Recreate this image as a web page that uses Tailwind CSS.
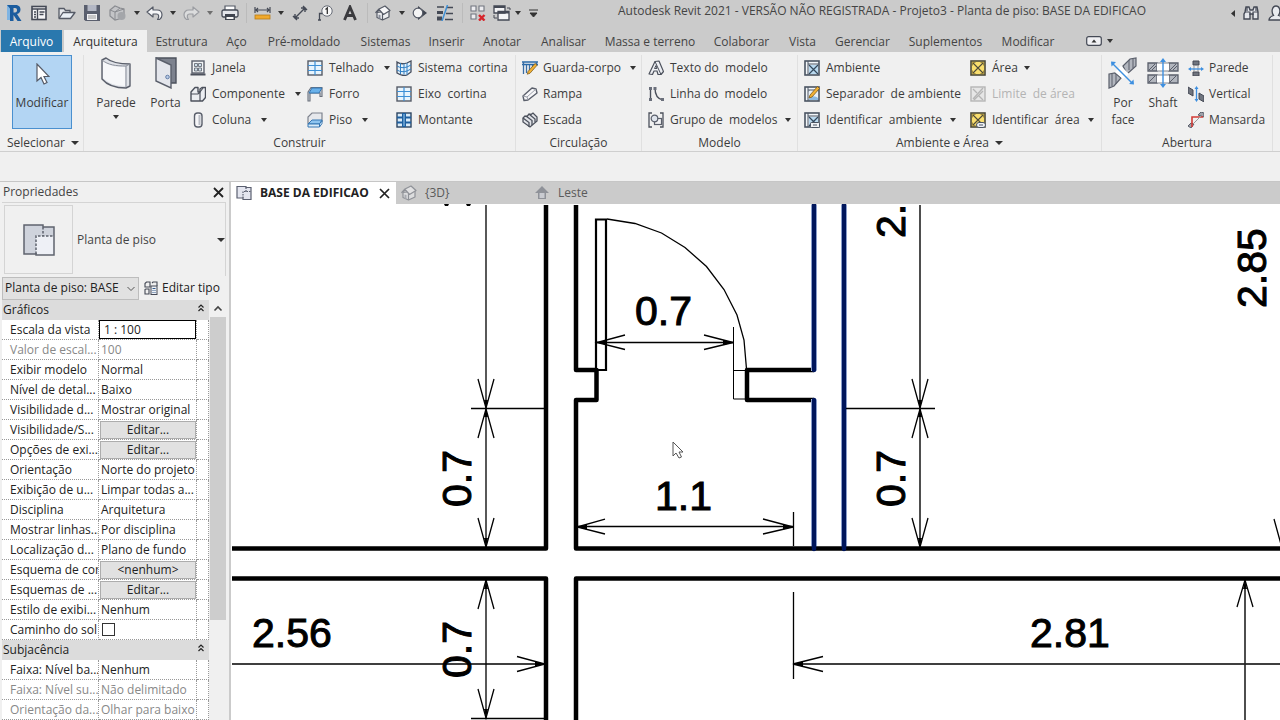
<!DOCTYPE html>
<html lang="pt-BR">
<head>
    <meta charset="UTF-8">
    <meta name="viewport" content="width=device-width, initial-scale=1.0">
    <title>Autodesk Revit 2021 - Projeto3</title>
    <script src="https://cdn.jsdelivr.net/npm/@tailwindcss/browser@4"></script>
</head>
<body class="h-screen flex flex-col overflow-hidden bg-[#f0f0f0] font-['Open_Sans','Noto_Sans',sans-serif] text-xs text-[#3c3c3c] whitespace-nowrap">
    <!-- Shared symbols -->
    <svg class="hidden">
        <symbol id="caret" viewBox="0 0 6 4"><path d="M0 0h6L3 4z" fill="#333"/></symbol>
        <symbol id="grid" viewBox="0 0 16 16">
            <rect x="1" y="1" width="14" height="14" fill="#e8f4fd" stroke="#555b66" stroke-width="1.4"/>
            <path d="M8 1v14M1 5.500h14M1 10.500h14" stroke="#3d8fd6" stroke-width="1.2"/>
        </symbol>
        <symbol id="plan" viewBox="0 0 16 16">
            <path d="M1 1.500h9v1h5v12H7V13H1z" fill="#e3e5ef" stroke="#5a5f70" stroke-width="1.2"/>
            <path d="M10 2.500v4M7 13V6.500h8" fill="none" stroke="#5a5f70" stroke-width="1.2" stroke-dasharray="1.500 1"/>
        </symbol>
        <symbol id="house" viewBox="0 0 16 16">
            <path d="M2 7.500v5L7.500 15l6.500-3V6z" fill="#eeeff2" stroke="#555a66" stroke-width="1.200" stroke-linejoin="round"/>
            <path d="M.8 7.500L4 4l6-3 5 4.500-6.500 4L4.500 5z" fill="#f7f7f9" stroke="#555a66" stroke-width="1.200" stroke-linejoin="round"/>
            <path d="M7.500 9v6" stroke="#555a66" stroke-width="1.200"/>
            <path d="M3.500 9.500L5.500 10v4l-2-.8z" fill="#888d99"/>
        </symbol>
        <symbol id="room" viewBox="0 0 16 16">
            <rect x="1" y="1" width="14" height="14" fill="#f4f7fa" stroke="#4a5462" stroke-width="1.6"/>
            <path d="M4 1v14M4 4h11" stroke="#4a5462"/>
            <rect x="5" y="5" width="9" height="9" fill="#b9d9ef"/>
            <path d="M5 5l9 9M14 5l-9 9" stroke="#33485c" stroke-width="1.2"/>
        </symbol>
        <symbol id="area" viewBox="0 0 16 16">
            <rect x="1" y="1" width="14" height="14" fill="#f9de6e" stroke="#4d4a3a" stroke-width="1.6"/>
            <path d="M3 3l10 10M13 3L3 13" stroke="#4d4a3a" stroke-width="1.1"/>
            <path d="M2.500 5.500v-3h3M10.500 2.500h3v3M2.500 10.500v3h3M10.500 13.500h3v-3" fill="none" stroke="#8a7630" stroke-width=".8"/>
        </symbol>
        <symbol id="pencil" viewBox="0 0 16 16">
            <path d="M6 10l7.500-8.500 2 2L8 12l-3 1z" fill="#f2b134" stroke="#7b5a1c" stroke-width=".8"/>
        </symbol>
    </svg>

    <header class="bg-[#cbcbcb]">
        <!-- Quick access toolbar -->
        <div class="flex items-center h-[30px] pb-1">
            <button aria-label="Revit" class="w-[27px] flex justify-center">
                <svg class="w-4 h-5" viewBox="0 0 16 20">
                    <path d="M1 2h3v15H1z" fill="#7fb4e3"/>
                    <path d="M3 2h6.500c4 0 5 2.500 5 4.500 0 2.500-1.500 4-3.500 4.500l4.500 7h-4L7.500 12v6H4V5.500L1 2zM7.500 5v4.500H9c1.500 0 2-.9 2-2.200C11 5.700 10.400 5 9 5z" fill="#1b5c9e" fill-rule="evenodd"/>
                </svg>
            </button>
            <button aria-label="Início" class="w-[23px] flex justify-center">
                <svg class="w-4 h-4" viewBox="0 0 16 16"><rect x="1" y="1.500" width="14" height="13" fill="#f5f5f7" stroke="#444955" stroke-width="1.6"/><path d="M1 4h14M6.500 4v10M3 7h2M3 9.500h2M3 12h2M8.500 7h5M8.500 9.500h4" stroke="#444955" stroke-width="1.4"/></svg>
            </button>
            <button aria-label="Abrir" class="w-[34px] flex justify-center">
                <svg class="w-[18px] h-4" viewBox="0 0 18 16"><path d="M1 13V3.500h5l1.500 2H12V8" fill="#e6e8ec" stroke="#555a66" stroke-width="1.3"/><path d="M1 13.500L5 7.500h12l-4.500 6z" fill="#e9eef5" stroke="#555a66" stroke-width="1.3" stroke-linejoin="round"/></svg>
            </button>
            <button aria-label="Salvar" class="w-4 flex justify-center">
                <svg class="w-4 h-4" viewBox="0 0 16 16"><path d="M0 0h16v16H1.500L0 14.500z" fill="#5a5f6e"/><rect x="3.500" y="0" width="9" height="6" fill="#b3b7c4"/><rect x="3" y="9" width="10" height="6" fill="#f2f2f5"/><path d="M4 11h8M4 13h8" stroke="#999"/></svg>
            </button>
            <button aria-label="Sincronizar" class="w-[34px] flex justify-center">
                <svg class="w-[17px] h-4" viewBox="0 0 17 16"><path d="M1 5l5-4 5 2 4 1v6l-5 4-4 1-5-4z" fill="#c3c4c7" stroke="#8a8c91" stroke-width="1.2"/><path d="M1 5l5 2 5-4M6 7v8M6 7l9-3" fill="none" stroke="#8a8c91"/><circle cx="12.500" cy="11" r="4" fill="#a4a6aa"/></svg>
            </button>
            <svg class="w-[6px] h-[4px]"><use href="#caret"/></svg>
            <button aria-label="Desfazer" class="w-[29px] flex justify-center">
                <svg class="w-[17px] h-4" viewBox="0 0 17 16"><path d="M1 7l6-5v3h4c3.500 0 5 2.500 5 5s-1 3.500-2.500 4.500h-2c2-2.500 1.500-5.500-1-5.500H7v3z" fill="#f5f6f8" stroke="#555a66" stroke-width="1.2" stroke-linejoin="round"/></svg>
            </button>
            <svg class="w-[6px] h-[4px] ml-[1px]"><use href="#caret"/></svg>
            <button aria-label="Refazer" class="w-[31px] flex justify-center opacity-40">
                <svg class="w-[17px] h-4" viewBox="0 0 17 16"><path d="M16 7l-6-5v3H6C2.500 5 1 7.500 1 10s1 3.500 2.500 4.500h2C3.500 12 4 9 6.500 9H10v3z" fill="#f5f6f8" stroke="#555a66" stroke-width="1.2" stroke-linejoin="round"/></svg>
            </button>
            <svg class="w-[6px] h-[4px] opacity-60"><use href="#caret"/></svg>
            <button aria-label="Imprimir" class="w-[33px] flex justify-center">
                <svg class="w-[18px] h-4" viewBox="0 0 18 16"><path d="M4 5V1h10v4" fill="#fff" stroke="#555a66" stroke-width="1.2"/><rect x="1" y="5" width="16" height="7" rx="1.500" fill="#e3e5ea" stroke="#444955" stroke-width="1.3"/><path d="M4 9h10v6H4z" fill="#3f444f"/><path d="M5.500 12h7v2h-7z" fill="#f4f4f4"/></svg>
            </button>
            <div class="w-px h-5 bg-[#bbb]"></div>
            <button aria-label="Medir" class="w-[31px] flex justify-center">
                <svg class="w-[17px] h-4" viewBox="0 0 17 16"><path d="M1 2v6M16 2v6M1 5h15M4 3L2 5l2 2M13 3l2 2-2 2" fill="none" stroke="#444955" stroke-width="1.2"/><rect x="1" y="10" width="15" height="4" fill="#f0a92c" stroke="#b77c18" stroke-width=".8"/></svg>
            </button>
            <svg class="w-[6px] h-[4px]"><use href="#caret"/></svg>
            <button aria-label="Cota alinhada" class="w-[32px] flex justify-center">
                <svg class="w-4 h-4" viewBox="0 0 16 16"><path d="M3 13L13 3M1 11l4 4M11 1l4 4M3 9v4h4M9 3h4v4" fill="none" stroke="#444955" stroke-width="1.4"/></svg>
            </button>
            <button aria-label="Identificador" class="w-[18px] flex justify-center">
                <svg class="w-4 h-4" viewBox="0 0 16 16"><path d="M1 15h3M2.500 15V8.500H6" fill="none" stroke="#444955" stroke-width="1.3"/><circle cx="10" cy="6" r="5.200" fill="#f7f7f7" stroke="#666b76"/><path d="M8.500 4.500L10.300 3v6" fill="none" stroke="#333" stroke-width="1.3"/></svg>
            </button>
            <button aria-label="Texto" class="w-[31px] flex justify-center">
                <svg class="w-[14px] h-4" viewBox="0 0 14 16"><path d="M1.500 15L7 2l5.500 13M3.500 10.500h7" fill="none" stroke="#3a3a3e" stroke-width="2.800"/></svg>
            </button>
            <div class="w-px h-5 ml-[2px] bg-[#bbb]"></div>
            <button aria-label="Vista 3D" class="w-[29px] flex justify-center"><svg class="w-4 h-4"><use href="#house"/></svg></button>
            <svg class="w-[6px] h-[4px] ml-[2px]"><use href="#caret"/></svg>
            <button aria-label="Corte" class="w-[28px] flex justify-center">
                <svg class="w-[15px] h-4" viewBox="0 0 15 16"><path d="M6 1l9 7-9 7z" fill="#3f444f"/><circle cx="6" cy="8" r="4.800" fill="#f4f4f4" stroke="#555a66" stroke-width="1.2"/></svg>
            </button>
            <button aria-label="Linhas finas" class="w-[24px] flex justify-center">
                <svg class="w-[18px] h-4" viewBox="0 0 18 16"><path d="M1 2h7M11 2.500h6M10 8.500h7M9 14.500h8" stroke="#444955" stroke-width="1.4"/><path d="M1 7.500h6" stroke="#444955" stroke-width="3"/><path d="M1 13.500h5" stroke="#444955" stroke-width="4"/><path d="M11.500 0L6 16" stroke="#3d8fd6" stroke-width="1.500"/></svg>
            </button>
            <div class="w-px h-5 ml-[5px] bg-[#bbb]"></div>
            <button aria-label="Fechar vistas" class="w-[29px] flex justify-center">
                <svg class="w-4 h-4" viewBox="0 0 16 16"><path d="M1 1h5v5H1zM9 1h5v5H9zM1 9h5v5H1z" fill="#ededf0" stroke="#70757f" stroke-width="1.1"/><path d="M9 10l5.500 5.500M14.500 10L9 15.500" stroke="#d6252b" stroke-width="2.400"/></svg>
            </button>
            <button aria-label="Alternar janelas" class="w-[20px] flex justify-center">
                <svg class="w-[18px] h-4" viewBox="0 0 18 16"><path d="M1 1h11v7H1zM5 6.500h11V15H5z" fill="#f4f4f6" stroke="#444955" stroke-width="1.300"/><path d="M1 2h11M5 7.500h11" stroke="#444955" stroke-width="2"/><path d="M14 3h3v2M1 10v3h3" fill="none" stroke="#444955"/></svg>
            </button>
            <svg class="w-[6px] h-[4px] ml-[3px]"><use href="#caret"/></svg>
            <button aria-label="Personalizar" class="w-[24px] flex justify-center">
                <svg class="w-[9px] h-2" viewBox="0 0 9 8"><path d="M0 1h9M1 4h7L4.500 8z" fill="#333" stroke="#333"/></svg>
            </button>
            <h1 class="flex-1 pl-[73px] pb-1 text-xs text-[#444] overflow-hidden">Autodesk Revit 2021 - VERSÃO NÃO REGISTRADA - Projeto3 - Planta de piso: BASE DA EDIFICAO</h1>
            <svg class="w-1 h-[7px] mr-2" viewBox="0 0 4 7"><path d="M4 0v7L0 3.500z" fill="#333"/></svg>
            <button aria-label="Pesquisar" class="mr-2">
                <svg class="w-[17px] h-4" viewBox="0 0 17 16"><path d="M2 7l1-5h3l1 3h3l1-3h3l1 5v7h-5V9H7v5H1V9z" fill="#e4e6eb" stroke="#444955" stroke-width="1.4"/><path d="M2 7h5v3M15 7h-5v3M4 2v4M13 2v4" fill="none" stroke="#444955" stroke-width="1.2"/></svg>
            </button>
            <button aria-label="Conta" class="w-3 overflow-hidden">
                <svg class="w-4 h-4" viewBox="0 0 16 16"><path d="M1 15c0-3 3-4 4.500-4.500C3 7 4 1 8 1s5 6 2.500 9.500C12 11 15 12 15 15z" fill="#e9ebef" stroke="#444955" stroke-width="1.300"/></svg>
            </button>
        </div>

        <!-- Ribbon tabs -->
        <nav class="flex h-[22px] items-stretch text-center text-[#444] [&>a]:leading-6">
            <a href="#" class="w-[61px] ml-px mr-[2px] bg-[#2a78ae] text-white">Arquivo</a>
            <a href="#" class="w-[83px] bg-[#f0f0f0] text-[#333]">Arquitetura</a>
            <a href="#" class="w-[69px]">Estrutura</a>
            <a href="#" class="w-[41px]">Aço</a>
            <a href="#" class="w-[94px]">Pré-moldado</a>
            <a href="#" class="w-[69px]">Sistemas</a>
            <a href="#" class="w-[53px]">Inserir</a>
            <a href="#" class="w-[58px]">Anotar</a>
            <a href="#" class="w-[65px]">Analisar</a>
            <a href="#" class="w-[108px]">Massa e terreno</a>
            <a href="#" class="w-[75px]">Colaborar</a>
            <a href="#" class="w-[47px]">Vista</a>
            <a href="#" class="w-[73px]">Gerenciar</a>
            <a href="#" class="w-[93px]">Suplementos</a>
            <a href="#" class="w-[72px]">Modificar</a>
            <button aria-label="Minimizar faixa" class="flex items-center gap-[5px] ml-[22px]">
                <svg class="w-4 h-[10px]" viewBox="0 0 16 10"><rect x=".7" y=".7" width="14.600" height="8.600" rx="2" fill="#f0f0f3" stroke="#444955" stroke-width="1.200"/><path d="M5.500 6.500L8 3.500l2.500 3z" fill="#333"/></svg>
                <svg class="w-[6px] h-[4px]"><use href="#caret"/></svg>
            </button>
        </nav>
    </header>

    <!-- Ribbon panels -->
    <section class="flex h-[100px] pt-[3px] border-b border-[#cfcfcf] shrink-0 overflow-hidden [&>div]:shrink-0 [&>div]:border-r [&>div]:border-[#e0e0e0]">
        <div class="w-[84px]">
            <button class="ml-3 w-[60px] h-[74px] mb-1 bg-[#b3d5f3] border border-[#4a90cf] flex flex-col items-center pt-[7px] gap-[10px]">
                <svg class="w-4 h-[22px]" viewBox="0 0 16 22"><path d="M3 1v17l4-3.500L10 21l3-1.500-3-6h5z" fill="#fff" stroke="#555a66" stroke-width="1.200"/></svg>
                Modificar
            </button>
            <button class="flex items-center gap-[6px] h-5 pl-[7px]">Selecionar <svg class="w-2 h-1" viewBox="0 0 8 4"><path d="M0 0h8L4 4z" fill="#333"/></svg></button>
        </div>

        <div class="w-[432px]">
            <div class="flex h-[78px]">
                <button class="w-[64px] flex flex-col items-center pt-[2px]">
                    <svg class="w-8 h-8" viewBox="0 0 32 32"><path d="M2 3l4-2c6 5 14 6 24 6v22l-4 2C15 31 7 28 2 22z" fill="#dfe2e8" stroke="#5a5f6b" stroke-width="1.400" stroke-linejoin="round"/><path d="M3 4c6 5 14 6 22 6v19C16 29 8 26 3 21z" fill="#f6f7f9"/><path d="M2 3c6 5 14 6 24 6l4-2M26 9v21" fill="none" stroke="#8a8f9a"/></svg>
                    <span class="mt-[5px] leading-[18px]">Parede</span>
                    <svg class="w-[6px] h-[4px] mt-[3px]"><use href="#caret"/></svg>
                </button>
                <button class="w-[35px] flex flex-col items-center pt-[2px]">
                    <svg class="w-6 h-8" viewBox="0 0 24 32"><path d="M2 1h20v25h-5" fill="#7d828e" stroke="#4c515c" stroke-width="1.400"/><path d="M2 1l15 7v23L2 24z" fill="#e4e6ec" stroke="#5a5f6b" stroke-width="1.400"/><circle cx="13.500" cy="20" r="1.800" fill="#b9cbe6" stroke="#4c6a99" stroke-width=".8"/></svg>
                    <span class="mt-[5px] leading-[18px]">Porta</span>
                </button>
                <div class="w-[117px] pl-[7px] [&>button]:flex [&>button]:items-center [&>button]:gap-[6px] [&>button]:h-[26px]">
                    <button><svg class="w-4 h-4" viewBox="0 0 16 16"><rect x="2" y="1" width="12" height="12" fill="#f2f4f6" stroke="#5a5f6b" stroke-width="1.400"/><path d="M4.500 3.500h3v3h-3zM8.500 3.500h3v3h-3zM4.500 8h3v3h-3zM8.500 8h3v3h-3z" fill="#cfe0ea" stroke="#5a5f6b" stroke-width=".8"/><path d="M.5 14.500h15" stroke="#4c515c" stroke-width="2"/></svg>Janela</button>
                    <button><svg class="w-4 h-4" viewBox="0 0 16 16"><path d="M1 8V6l4-4.500h3V6h2V3l2-1.500h3.500v10l-3 3.500H1z" fill="#eceef2" stroke="#4c515c" stroke-width="1.400" stroke-linejoin="round"/><path d="M1 8h7l2-2v9M10 6l3-4" fill="none" stroke="#4c515c" stroke-width="1.200"/></svg>Componente<svg class="w-[6px] h-[4px] ml-1"><use href="#caret"/></svg></button>
                    <button><svg class="w-4 h-4" viewBox="0 0 16 16"><rect x="4.500" y="1" width="7.500" height="14" rx="3" fill="#f6f6f8" stroke="#5a5f6b" stroke-width="1.400"/><path d="M9.500 3v10" stroke="#b9bcc4" stroke-width="2"/></svg>Coluna<svg class="w-[6px] h-[4px] ml-1"><use href="#caret"/></svg></button>
                </div>
                <div class="w-[89px] pl-[7px] [&>button]:flex [&>button]:items-center [&>button]:gap-[6px] [&>button]:h-[26px]">
                    <button><svg class="w-4 h-4"><use href="#grid"/></svg>Telhado<svg class="w-[6px] h-[4px] ml-1"><use href="#caret"/></svg></button>
                    <button><svg class="w-4 h-4" viewBox="0 0 16 16"><path d="M1 6l3-4.500h11v9H13V7H3v8H1z" fill="#d5d9e0" stroke="#6a707c" stroke-width="1.100"/><path d="M2 7l3-5h10l-3 5z" fill="#69b1ea" stroke="#3576b3"/></svg>Forro</button>
                    <button><svg class="w-4 h-4" viewBox="0 0 16 16"><path d="M1 12V5l4-4h10v9" fill="#e6e8ec" stroke="#7d828d" stroke-width="1.200"/><path d="M1 12l4-4h10l-2.500 4z" fill="#8ec5f0" stroke="#3576b3"/><path d="M1 12h11.500v3H1zM12.500 12L15 8.500v3L12.500 15" fill="#d9ecf9" stroke="#3576b3"/></svg>Piso<svg class="w-[6px] h-[4px] ml-1"><use href="#caret"/></svg></button>
                </div>
                <div class="pl-[7px] [&>button]:flex [&>button]:items-center [&>button]:gap-[6px] [&>button]:h-[26px]">
                    <button><svg class="w-4 h-4" viewBox="0 0 16 16"><path d="M1 2c3 2 7 2 10 1l4-2v11l-4 3c-3 1-7 0-10-2z" fill="#e4f1fb" stroke="#444c5c" stroke-width="1.300"/><path d="M1 6c3 2 7 2 10 1l4-2M1 10c3 2 7 2 10 1l4-2M4.500 3v11M8 3.500v11M11 3v12" fill="none" stroke="#2f7fc4"/></svg>Sistema&nbsp; cortina</button>
                    <button><svg class="w-4 h-4"><use href="#grid"/></svg>Eixo&nbsp; cortina</button>
                    <button><svg class="w-4 h-4" viewBox="0 0 16 16"><rect x="1" y="1" width="14" height="14" fill="#d9ebf8" stroke="#2d4561" stroke-width="1.400"/><path d="M1 5.500h14M1 10.500h14" stroke="#1d5f9f" stroke-width="2.200"/><path d="M8 1v14" stroke="#1d5f9f" stroke-width="4"/><path d="M8 2v12" stroke="#9fd0f5"/></svg>Montante</button>
                </div>
            </div>
            <div class="h-5 leading-5 text-center">Construir</div>
        </div>

        <div class="w-[126px]">
            <div class="h-[78px] pl-[6px] [&>button]:flex [&>button]:items-center [&>button]:gap-[5px] [&>button]:h-[26px]">
                <button><svg class="w-4 h-4" viewBox="0 0 16 16"><path d="M0 2h16M0 4.500h16" stroke="#2869a8" stroke-width="1.600"/><path d="M1.500 2v12M4.500 5v8M7.500 5v8M10.500 5v5M14.500 2v4" stroke="#3a6ea5" stroke-width="1.300"/><use href="#pencil" y="2" width="16" height="15"/></svg>Guarda-corpo<svg class="w-[6px] h-[4px] ml-1"><use href="#caret"/></svg></button>
                <button><svg class="w-4 h-4" viewBox="0 0 16 16"><path d="M1 10l9-8 4 1 1 4-9 7-4 .5z" fill="#f7f7f9" stroke="#5a5f6b" stroke-width="1.400" stroke-linejoin="round"/><path d="M1 10l4 1 1 3M5 11l9-8" fill="none" stroke="#9a9ea8"/></svg>Rampa</button>
                <button><svg class="w-4 h-4" viewBox="0 0 16 16"><path d="M1 6l2-2 2 .5L7 2l2 .5L11 1l4 4v4l-7 6-7-5z" fill="#e2e4e9" stroke="#4c515c" stroke-width="1.300"/><path d="M1 6l6 4.500V15M4 4l6 4.500V13M7.500 2.500L13 7v3" fill="none" stroke="#4c515c" stroke-width="1.300"/></svg>Escada</button>
            </div>
            <div class="h-5 leading-5 text-center">Circulação</div>
        </div>

        <div class="w-[156px]">
            <div class="h-[78px] pl-[6px] [&>button]:flex [&>button]:items-center [&>button]:gap-[6px] [&>button]:h-[26px]">
                <button><svg class="w-4 h-4" viewBox="0 0 16 16"><path d="M1 14L7 1.500l4-.5 4.500 10.500-2.500 3h-3L9 11H6l-1.500 3.500z" fill="#eceef2" stroke="#4c515c" stroke-width="1.200" stroke-linejoin="round"/><path d="M7 1.500l6 13M6.500 8.500L8 5.500l1 3z" fill="none" stroke="#4c515c"/></svg>Texto do&nbsp; modelo</button>
                <button><svg class="w-4 h-4" viewBox="0 0 16 16"><path d="M2.500 2v12M7 2c0 7 2 11 8 12" fill="none" stroke="#4c515c" stroke-width="1.400"/><path d="M1 1h3v3H1zM1 12h3v3H1zM5.500 1h3v3h-3zM13 12h3v3h-3z" fill="#6a6f7b"/></svg>Linha do&nbsp; modelo</button>
                <button><svg class="w-4 h-4" viewBox="0 0 16 16"><path d="M4 1H1v14h3M12 1h3v14h-3" fill="none" stroke="#4c515c" stroke-width="1.300"/><rect x="6.500" y="6.500" width="7" height="6" fill="#f3f3f6" stroke="#5a5f6b" stroke-width="1.200"/><circle cx="6.500" cy="6.500" r="3.300" fill="#dfe4ec" stroke="#5a5f6b" stroke-width="1.200"/></svg>Grupo de&nbsp; modelos<svg class="w-[6px] h-[4px] ml-[2px]"><use href="#caret"/></svg></button>
            </div>
            <div class="h-5 leading-5 text-center">Modelo</div>
        </div>

        <div class="w-[304px]">
            <div class="flex h-[78px]">
                <div class="w-[164px] pl-[6px] [&>button]:flex [&>button]:items-center [&>button]:gap-[6px] [&>button]:h-[26px]">
                    <button><svg class="w-4 h-4"><use href="#room"/></svg>Ambiente</button>
                    <button><svg class="w-4 h-4"><use href="#room"/><path d="M5 5h9v9H5z" fill="#e8f0f6"/><path d="M5 13c3-4 6-3 9-1v2H5z" fill="#8fbbe0"/><use href="#pencil" y="-1"/></svg>Separador&nbsp; de ambiente</button>
                    <button><svg class="w-4 h-4"><use href="#room"/><rect x="6.500" y="10.500" width="9" height="5" rx="1" fill="#f0f2f5" stroke="#4a5462"/><path d="M9 13h4" stroke="#4a5462"/></svg>Identificar&nbsp; ambiente<svg class="w-[6px] h-[4px] ml-[2px]"><use href="#caret"/></svg></button>
                </div>
                <div class="pl-2 [&>button]:flex [&>button]:items-center [&>button]:gap-[6px] [&>button]:h-[26px]">
                    <button><svg class="w-4 h-4"><use href="#area"/></svg>Área<svg class="w-[6px] h-[4px]"><use href="#caret"/></svg></button>
                    <button disabled class="text-[#b4b4b4]"><svg class="w-4 h-4" viewBox="0 0 16 16"><rect x="1" y="1" width="14" height="14" fill="#e6e6e6" stroke="#b5b5b5" stroke-width="1.400"/><path d="M3 13L13 2M3 3l4 4M9 10l4 4M4 14l9-9" stroke="#b5b5b5" stroke-width="1.300"/></svg>Limite&nbsp; de área</button>
                    <button><svg class="w-4 h-4"><use href="#area"/><rect x="6.500" y="10.500" width="9" height="5" rx="2.500" fill="#f0f2f5" stroke="#4a5462"/><path d="M9 13h4" stroke="#4a5462"/></svg>Identificar&nbsp; área<svg class="w-[6px] h-[4px] ml-[2px]"><use href="#caret"/></svg></button>
                </div>
            </div>
            <button class="flex items-center justify-center gap-[6px] h-5 w-full">Ambiente e Área <svg class="w-2 h-1" viewBox="0 0 8 4"><path d="M0 0h8L4 4z" fill="#333"/></svg></button>
        </div>

        <div class="w-[171px]">
            <div class="flex h-[78px]">
                <button class="w-[42px] flex flex-col items-center pt-[2px]">
                    <svg class="w-8 h-8" viewBox="0 0 32 32"><path d="M16 9l7-7 6-1v8l-9 8zM2 17l6-1 6 5-7 8-5 2z" fill="#b2b6be" stroke="#5a5f6b" stroke-width="1.200"/><path d="M22 3v10M26 2v9M5 17v12M9 17v10" stroke="#5a5f6b"/><path d="M14 9l8 8-6 5-8-7z" fill="#fff"/><path d="M5 6l20 20" stroke="#3d8fe0" stroke-width="1.400"/><path d="M4 4.500l5 .5-4.500 4.500zM27 27.500l-5-.5 4.500-4.500z" fill="#3d8fe0"/></svg>
                    <span class="mt-[5px] leading-[17px] whitespace-normal">Por face</span>
                </button>
                <button class="w-[38px] flex flex-col items-center pt-[2px]">
                    <svg class="w-8 h-8" viewBox="0 0 32 32"><path d="M1 6h9v8H1zM22 6h9v8h-9zM1 18h9v8H1zM22 18h9v8h-9z" fill="#b2b6be" stroke="#5a5f6b" stroke-width="1.300"/><path d="M2 13l6-6M5 13l4-4M23 13l6-6M26 13l4-4M2 25l6-6M23 25l6-6" stroke="#5a5f6b"/><path d="M10 6h12v8H10zM10 18h12v8H10z" fill="#fff"/><path d="M10 6h12M10 14h12M10 18h12M10 26h12" stroke="#80858f"/><path d="M16 3v26" stroke="#3d8fe0" stroke-width="1.400"/><path d="M13 5l3-4 3 4zM13 27l3 4 3-4z" fill="#3d8fe0"/></svg>
                    <span class="mt-[5px] leading-[17px]">Shaft</span>
                </button>
                <div class="pl-[6px] [&>button]:flex [&>button]:items-center [&>button]:gap-[5px] [&>button]:h-[26px]">
                    <button><svg class="w-4 h-4" viewBox="0 0 16 16"><path d="M5 1h6v4H5zM5 12h6v4H5z" fill="#70757f" stroke="#444955"/><path d="M6 5v7M10 5v7" stroke="#999"/><path d="M2 9h12" stroke="#3d8fe0" stroke-width="1.300"/><path d="M0 9l3-2v4zM16 9l-3-2v4z" fill="#3d8fe0"/></svg>Parede</button>
                    <button><svg class="w-4 h-4" viewBox="0 0 16 16"><path d="M0 1l5 3v6L0 7zM11 7l5 3v6l-5-3z" fill="#70757f" stroke="#444955"/><path d="M8.500 2v12" stroke="#3d8fe0" stroke-width="1.300"/><path d="M6.500 3l2-3 2 3zM6.500 13l2 3 2-3z" fill="#3d8fe0"/></svg>Vertical</button>
                    <button><svg class="w-4 h-4" viewBox="0 0 16 16"><path d="M0 14l3-3 3 1-3 4zM10 3l3-3 3 1v4z" fill="#9ea2ab" stroke="#5a5f6b"/><path d="M4 15V5h11" fill="none" stroke="#d23b36" stroke-width="1.600"/><path d="M5 12l8-8" stroke="#999"/></svg>Mansarda</button>
                </div>
            </div>
            <div class="h-5 leading-5 text-center">Abertura</div>
        </div>
    </section>

    <!-- Options bar -->
    <div class="h-[30px] shrink-0 border-b border-[#c6c6c6]"></div>

    <div class="flex flex-1 min-h-0">
        <!-- Properties palette -->
        <aside class="w-[231px] shrink-0 pl-[2px] flex flex-col border-r-2 border-[#cbcbcb] text-[#222]">
            <div class="flex items-center justify-between h-5 pl-px pr-[5px] text-[#444]">
                <h2>Propriedades</h2>
                <button aria-label="Fechar"><svg class="w-[11px] h-[11px]" viewBox="0 0 11 11"><path d="M1 1l9 9M10 1l-9 9" stroke="#222" stroke-width="1.800"/></svg></button>
            </div>
            <button class="flex items-center h-[74px] mr-[3px] pl-[2px] border-t border-r border-[#d4d4d4] text-[#444]">
                <span class="w-[69px] h-[69px] border border-[#d4d4d4] flex items-center justify-center">
                    <svg class="w-8 h-8" viewBox="0 0 32 32"><path d="M1 1h19v2h11v28H13v-1H1z" fill="#cfd3dc"/><path d="M13 12h18v19H13z" fill="#eef0f6"/><path d="M20 3V1H1v29h12M20 3h11v28H13v-2" fill="none" stroke="#5f636e" stroke-width="1.500"/><path d="M20 3v9M13 30V12h18" fill="none" stroke="#5f636e" stroke-width="1.500" stroke-dasharray="2.500 1.500"/></svg>
                </span>
                <span class="flex-1 pl-1 text-left">Planta de piso</span>
                <svg class="w-2 h-1" viewBox="0 0 8 4"><path d="M0 0h8L4 4z" fill="#333"/></svg>
            </button>
            <div class="flex items-center h-[24px]">
                <div class="relative w-[137px]">
                    <select aria-label="Tipo de vista" class="appearance-none w-full h-[23px] pl-[2px] bg-[#e1e1e1] border border-[#bdbdbd]">
                        <option>Planta de piso: BASE</option>
                    </select>
                    <svg class="absolute right-1 top-[9px] w-2 h-[6px] pointer-events-none" viewBox="0 0 8 6"><path d="M.5 1L4 4.500 7.500 1" fill="none" stroke="#555"/></svg>
                </div>
                <button class="flex items-center gap-1 pl-[5px]">
                    <svg class="w-[14px] h-[14px]" viewBox="0 0 14 14"><path d="M1 2.500L2.500 1H6v5H1zM8 2l1-1h4v4M1 8.500L2 8h3v5H1z" fill="none" stroke="#444955" stroke-width="1.100"/><rect x="7" y="5" width="6" height="8.500" fill="#eef1f6" stroke="#444955"/><path d="M8.500 7.500h3M8.500 9.500h1M10.500 9.500h1M8.500 11.500h1M10.500 11.500h1" stroke="#345a8a"/></svg>
                    Editar tipo
                </button>
            </div>
            <div class="flex flex-1 min-h-0 overflow-hidden">
                <div class="w-[207px] overflow-hidden">
                    <table class="w-full table-fixed border-separate border-spacing-0">
                        <colgroup><col class="w-[97px]"><col class="w-[98px]"><col class="w-3"></colgroup>
                        <tbody id="properties"></tbody>
                    </table>
                </div>
                <div class="w-4 ml-px flex flex-col">
                    <svg class="w-4 h-[17px]" viewBox="0 0 16 17"><path d="M4.500 10.500L8 7l3.500 3.500" fill="none" stroke="#444" stroke-width="1.600"/></svg>
                    <div class="h-[303px] bg-[#cdcdcd]"></div>
                </div>
            </div>
        </aside>

        <main class="flex-1 min-w-0 flex flex-col bg-white">
            <!-- View tabs -->
            <nav class="flex h-[22px] shrink-0 bg-[#cbcbcb] text-[#5a5a5a]">
                <div class="flex items-center w-[165px] pl-[5px] bg-white text-[#222] font-bold">
                    <svg class="w-4 h-4"><use href="#plan"/></svg>
                    <a href="#" class="flex-1 pl-2">BASE DA EDIFICAO</a>
                    <button aria-label="Fechar vista" class="mr-[6px]"><svg class="w-[11px] h-[11px]" viewBox="0 0 11 11"><path d="M1 1l9 9M10 1l-9 9" stroke="#222" stroke-width="1.700"/></svg></button>
                </div>
                <a href="#" class="flex items-center gap-2 w-[133px] pl-[5px]"><svg class="w-4 h-4 opacity-50"><use href="#house"/></svg>{3D}</a>
                <a href="#" class="flex items-center gap-2 pl-[5px]"><svg class="w-4 h-4" viewBox="0 0 16 16"><path d="M8 1l7 7h-3v6H4V8H1z" fill="#8f9299"/><path d="M5.500 8h5v5h-5z" fill="#c9cbd1"/></svg>Leste</a>
            </nav>

            <!-- Floor plan, drawn in window coordinates -->
            <svg class="flex-1 w-full min-h-0 font-['Liberation_Sans',sans-serif] text-[41px]" role="img" aria-label="Planta de piso">
                <g transform="translate(-231 -204)" fill="none" stroke="#000">
                    <!-- walls -->
                    <g stroke-width="4.500" stroke-linejoin="round">
                        <path d="M546 205v343.500H232M576 205v165h20.500v30H576v148.500h704M232 578.500h314V730M1280 578.500H576V730"/>
                        <path d="M814 370h-67v30h67"/>
                    </g>
                    <g stroke="#b9cdf0" stroke-width="6"><path d="M814 205v166M814 399v147M844 205v341"/></g>
                    <g stroke="#00165c" stroke-width="4.500" stroke-linecap="round"><path d="M814 200v170M814 400v149M844 200v349"/></g>
                    <!-- door -->
                    <path d="M596 219.500h10V370h-10z" stroke-width="2.200"/>
                    <path d="M607 219L635 223.500 661.500 233 685 247.500 706.500 266.500 724 289.500 737 315 744 340 746.500 369" stroke-width="1.300"/>
                    <path d="M733.500 327v72h12M733.500 370.500h12"/>
                    <!-- dimension lines -->
                    <g stroke-width="1.300">
                        <path d="M486 205v343M471 408.500h73M486 580v138M471 718.500h73M232 664h313"/>
                        <path d="M597 342.500h136M577 526.500h216M793.500 512v34M793.500 592v87M793 664h487M846 408.500h89"/>
                        <path d="M920 205v342M1245 580v140" stroke="#222" stroke-width="1.600"/>
                        <path d="M478 379l8 29 8-29M478 438l8-29 8 29M478 518l8 29 8-29M478 609l8-29 8 29M478 689l8 29 8-29"/>
                        <path d="M912 379l8 29 8-29M912 438l8-29 8 29M912 518l8 29 8-29M1237 607l8-27 8 27M1274 519l8 29"/>
                        <path d="M625 335l-28 7.500 28 7M704 335l29 7.500-29 7M605 519l-28 8 28 7M763 519l30 8-30 7M517 656.500l28 7.500-28 7.500M823 656.500l-30 7.500 30 7.500"/>
                    </g>
                    <g fill="#000" stroke="none">
                        <path d="M597 342.500l10-2.500v5zM733 342.500l-10-2.500v5zM577 527l10-2.500v5zM793 527l-10-2.500v5zM545 664l-10-2.500v5zM793 664l10-2.500v5z"/>
                        <path d="M484 400h4l-2 8zM484 417h4l-2-8zM484 538h4l-2 8zM484 589h4l-2-8zM484 709h4l-2 8zM918 400h4l-2 8zM918 417h4l-2-8zM918 538h4l-2 8zM1243 589h4l-2-8z"/>
                        <path d="M444 204h5l-1 2h-3zM466 204h5l-1 2h-3z"/>
                    </g>
                    <!-- dimension values -->
                    <g fill="#000" stroke="#000" stroke-width="1">
                        <text x="635" y="325">0.7</text>
                        <text x="655" y="510">1.1</text>
                        <text x="252" y="647">2.56</text>
                        <text x="1030" y="647">2.81</text>
                        <text transform="translate(471 507) rotate(-90)">0.7</text>
                        <text transform="translate(471 678) rotate(-90)">0.7</text>
                        <text transform="translate(905 507) rotate(-90)">0.7</text>
                        <text transform="translate(905 238) rotate(-90)">2.</text>
                        <text transform="translate(1266 308) rotate(-90)">2.85</text>
                    </g>
                    <!-- mouse pointer -->
                    <path d="M673 442v14l3-3 3 5 2.500-1-2.500-5h4z" fill="#fff" stroke="#555"/>
                </g>
            </svg>
        </main>
    </div>

    <script>
        const properties = [
            { group: 'Gráficos' },
            { name: 'Escala da vista', value: '1 : 100', type: 'input' },
            { name: 'Valor de escal...', value: '100', type: 'disabled' },
            { name: 'Exibir modelo', value: 'Normal' },
            { name: 'Nível de detal...', value: 'Baixo' },
            { name: 'Visibilidade d...', value: 'Mostrar original' },
            { name: 'Visibilidade/S...', value: 'Editar...', type: 'button' },
            { name: 'Opções de exi...', value: 'Editar...', type: 'button' },
            { name: 'Orientação', value: 'Norte do projeto' },
            { name: 'Exibição de u...', value: 'Limpar todas a...' },
            { name: 'Disciplina', value: 'Arquitetura' },
            { name: 'Mostrar linhas...', value: 'Por disciplina' },
            { name: 'Localização d...', value: 'Plano de fundo' },
            { name: 'Esquema de cor', value: '<nenhum>', type: 'button' },
            { name: 'Esquemas de ...', value: 'Editar...', type: 'button' },
            { name: 'Estilo de exibi...', value: 'Nenhum' },
            { name: 'Caminho do sol', value: '', type: 'checkbox' },
            { group: 'Subjacência' },
            { name: 'Faixa: Nível ba...', value: 'Nenhum' },
            { name: 'Faixa: Nível su...', value: 'Não delimitado', type: 'disabled' },
            { name: 'Orientação da...', value: 'Olhar para baixo', type: 'disabled' }
        ];

        function escapeText(text) {
            return text.replace(/</g, '&lt;').replace(/>/g, '&gt;');
        }

        function createValue(item, id) {
            if (item.type === 'input') {
                return `<input id="${id}" value="${item.value}" class="block w-[97px] h-[19px] pl-1 bg-white border border-black">`;
            }
            if (item.type === 'button') {
                return `<button id="${id}" class="block w-24 h-[18px] ml-px leading-4 bg-[#e1e1e1] border border-[#adadad]">${escapeText(item.value)}</button>`;
            }
            if (item.type === 'checkbox') {
                return `<input id="${id}" type="checkbox" class="block appearance-none w-[13px] h-[13px] ml-[3px] bg-white border border-[#333]">`;
            }
            return `<span id="${id}" class="pl-[2px]">${item.value}</span>`;
        }

        function createRow(item, index) {
            if (item.group) {
                return `
                    <tr class="h-5 bg-[#dcdcdc]">
                        <th colspan="2" class="h-5 p-0 pl-px font-normal text-left">${item.group}</th>
                        <td class="p-0"><svg class="w-[6px] h-2 ml-px mb-1" viewBox="0 0 6 8"><path d="M.5 3.500L3 1l2.500 2.500M.5 7L3 4.500 5.500 7" fill="none" stroke="#222" stroke-width="1.200"/></svg></td>
                    </tr>
                `;
            }
            const color = item.type === 'disabled' ? 'text-[#888]' : 'text-[#222]';
            return `
                <tr class="h-5 bg-white ${color}">
                    <th class="h-5 p-0 pl-2 font-normal text-left overflow-hidden leading-[18px] border-r border-b border-dotted border-[#999]"><label for="prop-${index}">${item.name}</label></th>
                    <td class="p-0 overflow-hidden leading-[18px] border-r border-b border-dotted border-[#999]">${createValue(item, 'prop-' + index)}</td>
                    <td class="p-0 border-r border-b border-dotted border-[#999]"></td>
                </tr>
            `;
        }

        document.getElementById('properties').innerHTML = properties.map(createRow).join('');
    </script>
</body>
</html>
